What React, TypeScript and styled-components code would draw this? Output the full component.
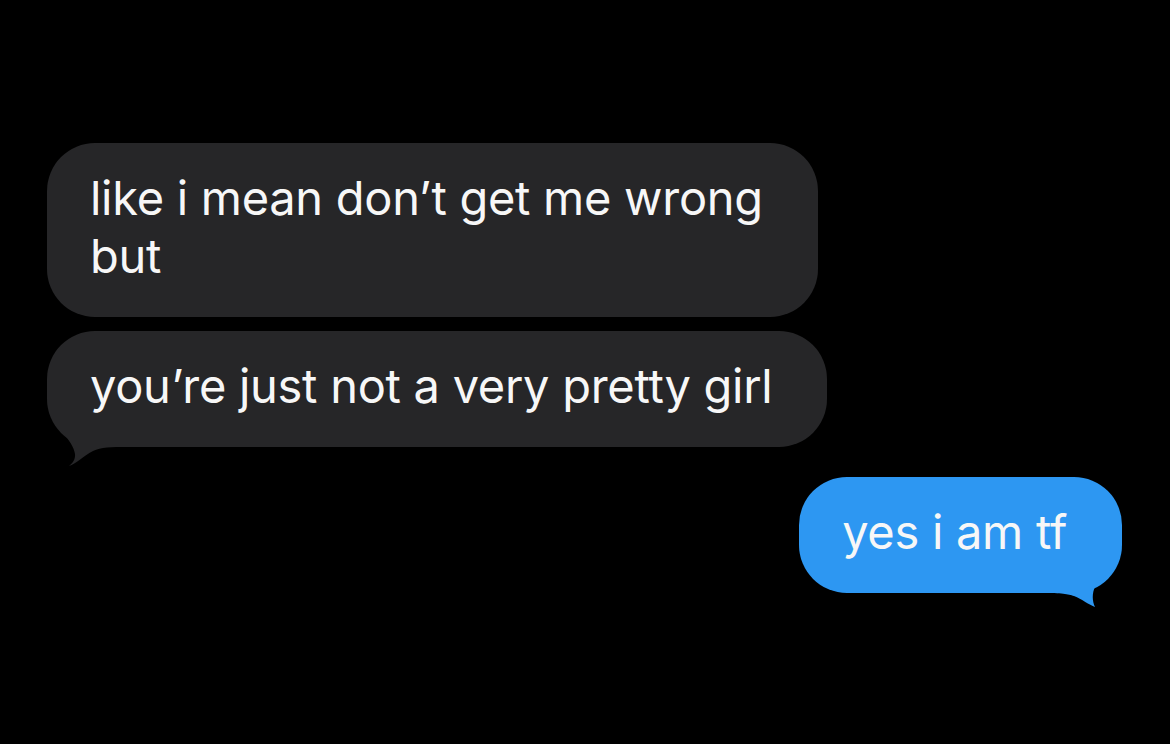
import React from "react";
import styled, { createGlobalStyle } from "styled-components";

const Global = createGlobalStyle`
  html, body { margin: 0; padding: 0; background: #000; }
  body { font-family: Inter, "Noto Sans", "Liberation Sans", sans-serif; }
`;

const Screen = styled.div`
  width: 1170px;
  height: 744px;
  background: #000;
  display: flex;
  flex-direction: column;
  padding: 143px 48px 0 47px;
  box-sizing: border-box;
  overflow: hidden;
`;

const Group = styled.div<{ $side: "left" | "right"; $gap: number; $top: number }>`
  display: flex;
  flex-direction: column;
  align-items: ${(p) => (p.$side === "left" ? "flex-start" : "flex-end")};
  gap: ${(p) => p.$gap}px;
  margin-top: ${(p) => p.$top}px;
`;

const Bubble = styled.div<{ $kind: "gray" | "blue" }>`
  position: relative;
  box-sizing: border-box;
  background: ${(p) => (p.$kind === "gray" ? "#262628" : "#2d97f2")};
  color: #f7f7f7;
  border-radius: 48px;
  padding: 26px 55px 32px 43px;
  font-size: 47px;
  line-height: 58px;
  letter-spacing: -0.28px;
  font-weight: 400;
  white-space: nowrap;
`;

const TailSvg = styled.svg<{ $side: "left" | "right" }>`
  position: absolute;
  bottom: -25px;
  width: 90px;
  height: 60px;
  overflow: visible;
  ${(p) => (p.$side === "left" ? "left: 0;" : "right: 0; transform: scaleX(-1);")}
`;

const TAILS = {
  left: "M16,-14 C22,-7 27,0 28,7 C28.5,12 26,16 22,19 C29,17 36,9 46,4 C54,0 64,0 80,0 L80,-34 L16,-34 Z",
  right: "M8,-26 C16,-18 24,-12 27,-6 C30,0 30,8 27,14 C33,12 40,6 48,3 C54,1 60,0 80,0 L80,-34 L8,-34 Z",
};

function Tail({ side, color }: { side: "left" | "right"; color: string }) {
  return (
    <TailSvg $side={side} viewBox="0 -35 90 60">
      <path d={TAILS[side]} fill={color} />
    </TailSvg>
  );
}

export default function App() {
  return (
    <>
      <Global />
      <Screen>
        <Group $side="left" $gap={14} $top={0}>
          <Bubble $kind="gray">
            like i mean don’t get me wrong
            <br />
            but
          </Bubble>
          <Bubble $kind="gray">
            you’re just not a very pretty girl
            <Tail side="left" color="#262628" />
          </Bubble>
        </Group>
        <Group $side="right" $gap={0} $top={30}>
          <Bubble $kind="blue">
            yes i am tf
            <Tail side="right" color="#2d97f2" />
          </Bubble>
        </Group>
      </Screen>
    </>
  );
}
